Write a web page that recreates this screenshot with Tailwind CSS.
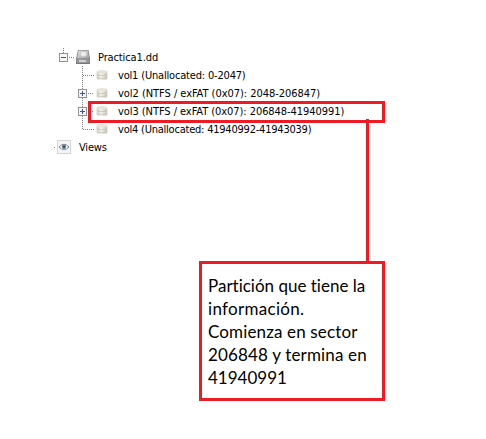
<!DOCTYPE html>
<html lang="es">
<head>
<meta charset="utf-8">
<title>Practica1.dd</title>
<script src="https://cdn.jsdelivr.net/npm/@tailwindcss/browser@4"></script>
</head>
<body class="bg-white">
<svg width="0" height="0" class="absolute">
  <defs>
    <linearGradient id="g" x1="0" x2="1"><stop offset="0" stop-color="#d2cec2"/><stop offset=".4" stop-color="#f6f4ee"/><stop offset="1" stop-color="#cbc6b9"/></linearGradient>
    <linearGradient id="h" x1="0" x2="1" y2="1"><stop offset="0" stop-color="#e6e6e6"/><stop offset="1" stop-color="#a0a0a4"/></linearGradient>
    <symbol id="vol" viewBox="0 0 12 12">
      <path d="M.7 2.5v7c0 2.1 10.6 2.1 10.6 0v-7z" fill="url(#g)"/>
      <path d="M.8 5.4c1 1.6 9.4 1.6 10.4 0M.8 8.2c1 1.6 9.4 1.6 10.4 0" fill="none" stroke="#b5b1a5" stroke-width=".6"/>
      <ellipse cx="6" cy="2.6" rx="5.3" ry="1.7" fill="#e7e4db"/>
    </symbol>
    <symbol id="box" viewBox="0 0 9 9">
      <rect x=".5" y=".5" width="8" height="8" fill="#f6f6f6" stroke="#929292"/>
      <path d="M2 4.5h5" stroke="#3f57a0"/>
    </symbol>
  </defs>
</svg>
<main class="relative w-[486px] h-[439px] overflow-hidden bg-white">
  <div class="flex flex-col pt-12 pl-[50px] text-[11px] leading-[20px] text-black whitespace-nowrap font-['DejaVu_Sans_Condensed','DejaVu_Sans',sans-serif]">
    <div class="flex h-[18px]">
      <svg class="w-12 h-[18px] shrink-0" viewBox="0 0 48 18">
        <path d="M13.5 0v5M19 9.5h6" stroke="#808080" stroke-dasharray="1 1"/>
        <use href="#box" x="9" y="5" width="9" height="9"/>
        <path d="M28 2h10.500l1.500 9v5H26v-5z" fill="#77777b"/>
        <path d="M28.500 2.500h9.500l1.200 8H27z" fill="url(#h)"/>
        <ellipse cx="33.500" cy="6" rx="3.400" ry="2.700" fill="#eeeeee" stroke="#b2b2b2" stroke-width=".6"/>
        <path d="M26.500 11h13v4h-13z" fill="#97979b"/>
        <path d="M29 12h7v2h-7z" fill="#d0d0d2"/>
      </svg>
      <span class="tracking-[-0.12px]">Practica1.dd</span>
    </div>
    <div class="flex h-[18px]">
      <svg class="w-[68px] h-[18px] shrink-0" viewBox="0 0 68 18"><path d="M32.5 0v18M33 9.5h12" stroke="#808080" stroke-dasharray="1 1"/><use href="#vol" x="46" y="3" width="12" height="12"/></svg>
      <span class="tracking-[-0.18px]">vol1 (Unallocated: 0-2047)</span>
    </div>
    <div class="flex h-[18px]">
      <svg class="w-[68px] h-[18px] shrink-0" viewBox="0 0 68 18"><path d="M32.5 0v18M38 9.5h6" stroke="#808080" stroke-dasharray="1 1"/><use href="#box" x="28" y="5" width="9" height="9"/><path d="M32.5 7v5" stroke="#3f57a0"/><use href="#vol" x="46" y="3" width="12" height="12"/></svg>
      <span class="tracking-[-0.04px]">vol2 (NTFS / exFAT (0x07): 2048-206847)</span>
    </div>
    <div class="flex h-[18px]">
      <svg class="w-[68px] h-[18px] shrink-0" viewBox="0 0 68 18"><path d="M32.5 0v18M42 9.5h2" stroke="#808080" stroke-dasharray="1 1"/><use href="#box" x="28" y="5" width="9" height="9"/><path d="M32.5 7v5" stroke="#3f57a0"/><use href="#vol" x="46" y="3" width="12" height="12"/></svg>
      <span class="tracking-[-0.06px]">vol3 (NTFS / exFAT (0x07): 206848-41940991)</span>
    </div>
    <div class="flex h-[18px]">
      <svg class="w-[68px] h-[18px] shrink-0" viewBox="0 0 68 18"><path d="M32.5 0v10M33 9.5h12" stroke="#808080" stroke-dasharray="1 1"/><use href="#vol" x="46" y="3" width="12" height="12"/></svg>
      <span class="tracking-[-0.22px]">vol4 (Unallocated: 41940992-41943039)</span>
    </div>
    <div class="flex h-[18px]">
      <svg class="w-[29px] h-[18px] shrink-0" viewBox="0 0 29 18">
        <path d="M4 9.5h1" stroke="#808080"/>
        <rect x="7.5" y="2.5" width="13" height="13" fill="#f4f4f4" stroke="#d4d4d4"/>
        <path d="M9 9q5-5.5 10 0q-5 5-10 0z" fill="#fff" stroke="#858585" stroke-width="1"/>
        <circle cx="14" cy="8.8" r="2.3" fill="#64919b"/><circle cx="14" cy="8.8" r="1" fill="#233c42"/>
      </svg>
      <span class="tracking-[-0.2px]">Views</span>
    </div>
  </div>
  <!-- annotation over the tree -->
  <div class="absolute left-[88px] top-[101px] w-[297px] h-[22px] border-3 border-[#ed1c24]"></div>
  <div class="absolute left-[366px] top-[119px] w-[3px] h-[143px] bg-[#ed1c24]"></div>
  <div class="absolute left-[199px] top-[261px] w-[186px] h-[140px] border-3 border-[#ed1c24] bg-white pl-1.5 pt-[10px] text-[17px] leading-[23px] text-black whitespace-nowrap [font-variant-ligatures:none] font-['Lato',sans-serif]">
    <p>Partición que tiene la</p><p class="tracking-[0.3px]">información.</p><p class="tracking-[0.14px]">Comienza en sector</p><p class="tracking-[0.16px]">206848 y termina en</p><p>41940991</p>
  </div>
</main>
</body>
</html>
